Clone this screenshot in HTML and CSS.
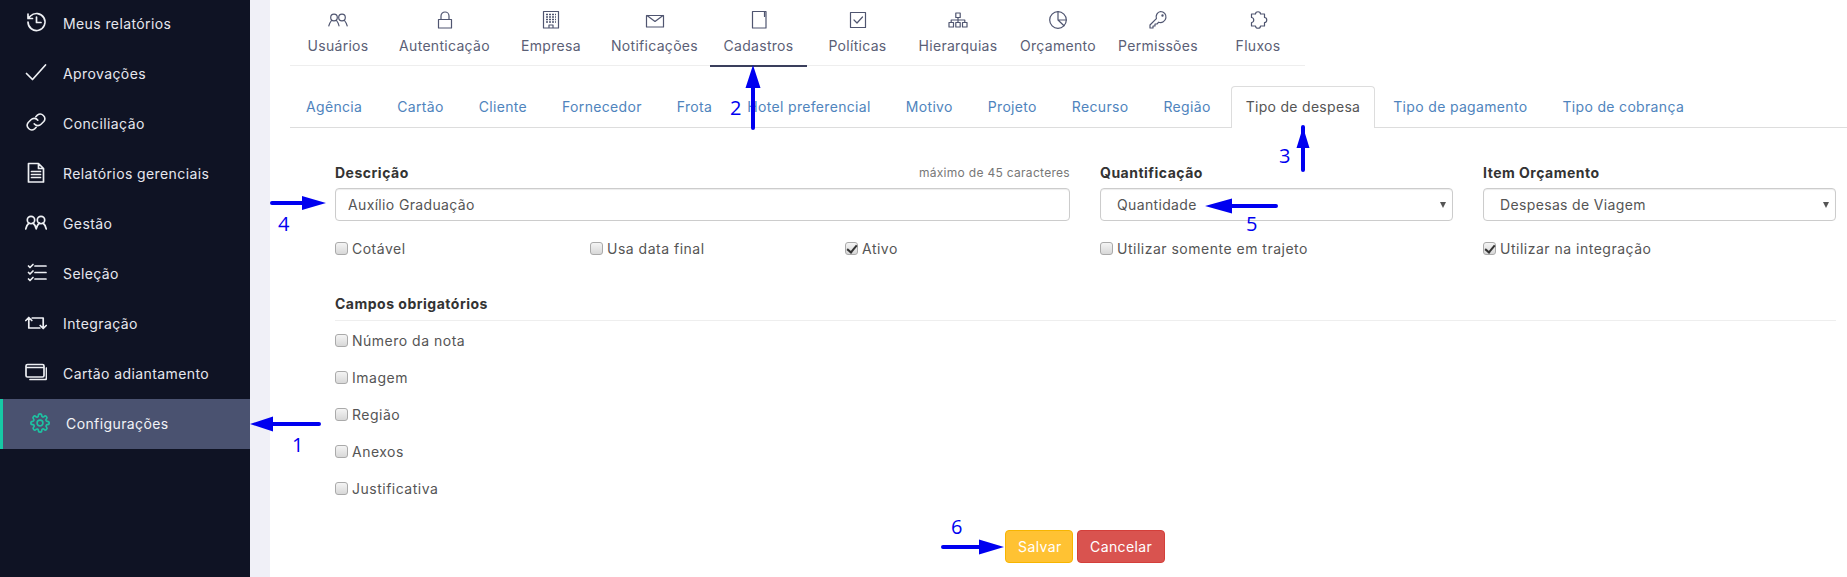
FILE: index.html
```html
<!DOCTYPE html>
<html lang="pt-BR">
<head>
<meta charset="utf-8">
<title>Configurações</title>
<link rel="stylesheet" href="styles.css">
</head>
<body>
<div class="app">
  <nav class="sidebar">
    <a class="side-item"><svg class="side-icon" viewBox="0 0 22 22"><path d="M3 11a8.500 8.500 0 1 0 2.500-6L3 7.500M3 3v4.500h4.500M11.500 6v5.500H16"/></svg>Meus relatórios</a>
    <a class="side-item"><svg class="side-icon" viewBox="0 0 22 22"><path d="M1.500 12.500l6 6L20.500 4"/></svg>Aprovações</a>
    <a class="side-item"><svg class="side-icon" viewBox="0 0 24 24"><path d="M10 14a5 5 0 0 0 7.500.5l3-3a5 5 0 0 0-7-7l-1.700 1.700M14 10a5 5 0 0 0-7.500-.5l-3 3a5 5 0 0 0 7 7l1.700-1.700"/></svg>Conciliação</a>
    <a class="side-item"><svg class="side-icon" viewBox="0 0 22 22"><path d="M3.500 2.500h10l5 5v13.500h-15zM13.500 2.500v5h5M6.500 10.500h9M6.500 13.500h9M6.500 16.500h9"/></svg>Relatórios gerenciais</a>
    <a class="side-item"><svg class="side-icon" viewBox="0 0 22 22"><circle cx="6" cy="9" r="3.700"/><circle cx="16" cy="9" r="3.700"/><path d="M.8 18c.3-2.500 1.500-4.500 3.200-6M8 12c1.700 1.500 2.900 3.500 3.200 6 .3-2.500 1.500-4.500 3.200-6M18 12c1.700 1.500 2.900 3.500 3.200 6"/></svg>Gestão</a>
    <a class="side-item"><svg class="side-icon" viewBox="0 0 22 22"><path d="M10 5h11M10 11.500h11M10 18h11M3.500 5L5 6.500l3-3M3.500 11.500L5 13l3-3M3.500 18L5 19.500l3-3"/></svg>Seleção</a>
    <a class="side-item"><svg class="side-icon" viewBox="0 0 22 22"><path d="M.8 9.500l3-3 3 3M3.800 7v10h11M21.200 14.500l-3 3-3-3M18.200 17V7h-11"/></svg>Integração</a>
    <a class="side-item"><svg class="side-icon" viewBox="0 0 22 22"><path d="M2.500 3.500h15a1.500 1.500 0 0 1 1.500 1.500v9.500a1.500 1.500 0 0 1-1.500 1.500h-15A1.500 1.500 0 0 1 1 14.500V5a1.500 1.500 0 0 1 1.500-1.500zM1 6.500h18M21.500 7v10a1.500 1.500 0 0 1-1.500 1.500H5"/></svg>Cartão adiantamento</a>
    <a class="side-item active"><svg class="side-icon gear" viewBox="0 0 24 24"><path d="M12 15.500a3.500 3.500 0 1 0 0-7 3.500 3.500 0 0 0 0 7zM19.400 15a1.650 1.650 0 0 0 .33 1.820l.06.06a2 2 0 0 1-2.830 2.830l-.06-.06a1.650 1.650 0 0 0-2.800 1.180V21a2 2 0 0 1-4 0v-.09a1.650 1.650 0 0 0-2.820-1.180l-.06.06a2 2 0 0 1-2.830-2.830l.06-.06A1.650 1.650 0 0 0 3.090 14H3a2 2 0 0 1 0-4h.09a1.650 1.650 0 0 0 1.180-2.820l-.06-.06a2 2 0 0 1 2.830-2.830l.06.06A1.650 1.650 0 0 0 10 3.090V3a2 2 0 0 1 4 0v.09a1.650 1.650 0 0 0 2.820 1.180l.06-.06a2 2 0 0 1 2.830 2.830l-.06.06A1.650 1.650 0 0 0 20.910 10H21a2 2 0 0 1 0 4h-.09a1.650 1.650 0 0 0-1.510 1z"/></svg>Configurações</a>
  </nav>
  <main class="main">
    <div class="topnav">
      <a class="top-item"><svg class="top-icon" viewBox="0 0 20 20"><circle cx="6" cy="7.500" r="3.300"/><circle cx="14" cy="7.500" r="3.300"/><path d="M.8 15.800c.3-2 1.300-3.500 2.700-5.300M8.500 10.500c1.400 1.800 2.400 3.300 2.500 5.300M16.500 10.500c1.400 1.800 2.400 3.300 2.700 5.300"/></svg><span>Usuários</span></a>
      <a class="top-item"><svg class="top-icon" viewBox="0 0 20 20"><path d="M3.500 9.500h13v8.500h-13zM6 9.500V6a4 4 0 0 1 8 0v3.500"/></svg><span>Autenticação</span></a>
      <a class="top-item"><svg class="top-icon" viewBox="0 0 20 20"><path d="M2.500 1.500h15V18h-15zM8 18v-3h4v3"/><path class="dots" d="M5 4.500h10M5 7h10M5 9.500h10M5 12h10"/></svg><span>Empresa</span></a>
      <a class="top-item"><svg class="top-icon" viewBox="0 0 20 20"><path d="M1.500 5.500h17v11.500h-17zM2 5.500l8 6 8-6"/></svg><span>Notificações</span></a>
      <a class="top-item current"><svg class="top-icon" viewBox="0 0 20 20"><path d="M3.500 1.500h13.500V18H3.500zM15.500 1.500v5"/></svg><span>Cadastros</span></a>
      <a class="top-item"><svg class="top-icon" viewBox="0 0 20 20"><path d="M2.500 2.500h15v15h-15zM6 10l3 3 5.500-6"/></svg><span>Políticas</span></a>
      <a class="top-item"><svg class="top-icon" viewBox="0 0 20 20"><path d="M7.800 3h4.400v4.500H7.800zM1 12.500h4.500V17H1zM7.800 12.500h4.400V17H7.800zM14.500 12.500H19V17h-4.500zM10 7.500v5M3.200 12.500V10h13.600v2.500"/></svg><span>Hierarquias</span></a>
      <a class="top-item"><svg class="top-icon" viewBox="0 0 20 20"><circle cx="10" cy="10" r="8.300"/><path d="M10 1.700V10h8.300M10 10l6 5.700"/></svg><span>Orçamento</span></a>
      <a class="top-item"><svg class="top-icon" viewBox="0 0 20 20"><path d="M12.500 1.500a5.500 5.500 0 1 1-1.800 10.700L9 14H7v2H5v2H2v-3l6.400-6.400A5.500 5.500 0 0 1 12.500 1.500z"/><circle cx="14.500" cy="5.500" r=".6"/></svg><span>Permissões</span></a>
      <a class="top-item"><svg class="top-icon" viewBox="0 0 20 20"><path d="M7.500 4C7.500 1 12.500 1 12.500 4H16.500V7.500C19.500 7.500 19.500 12.500 16.500 12.500V16H12.500C12.500 19 7.500 19 7.500 16H3.500V12.500C6.500 12.500 6.500 7.500 3.500 7.500V4Z"/></svg><span>Fluxos</span></a>
    </div>
    <div class="subtabs">
      <a class="subtab">Agência</a>
      <a class="subtab">Cartão</a>
      <a class="subtab">Cliente</a>
      <a class="subtab">Fornecedor</a>
      <a class="subtab">Frota</a>
      <a class="subtab">Hotel preferencial</a>
      <a class="subtab">Motivo</a>
      <a class="subtab">Projeto</a>
      <a class="subtab">Recurso</a>
      <a class="subtab">Região</a>
      <a class="subtab selected">Tipo de despesa</a>
      <a class="subtab">Tipo de pagamento</a>
      <a class="subtab">Tipo de cobrança</a>
    </div>
    <form class="form">
      <div class="fields">
        <div class="field">
          <div class="label-row"><label class="label">Descrição</label><span class="hint">máximo de 45 caracteres</span></div>
          <input class="control" type="text" value="Auxílio Graduação">
          <div class="check-cols">
            <label class="check"><input type="checkbox">Cotável</label>
            <label class="check"><input type="checkbox">Usa data final</label>
            <label class="check"><input type="checkbox" checked>Ativo</label>
          </div>
        </div>
        <div class="field">
          <div class="label-row"><label class="label">Quantificação</label></div>
          <div class="select-wrap"><select class="control select"><option>Quantidade</option></select></div>
          <label class="check single"><input type="checkbox">Utilizar somente em trajeto</label>
        </div>
        <div class="field">
          <div class="label-row"><label class="label">Item Orçamento</label></div>
          <div class="select-wrap"><select class="control select"><option>Despesas de Viagem</option></select></div>
          <label class="check single"><input type="checkbox" checked>Utilizar na integração</label>
        </div>
      </div>
      <h3 class="section">Campos obrigatórios</h3>
      <div class="required">
        <label class="check"><input type="checkbox">Número da nota</label>
        <label class="check"><input type="checkbox">Imagem</label>
        <label class="check"><input type="checkbox">Região</label>
        <label class="check"><input type="checkbox">Anexos</label>
        <label class="check"><input type="checkbox">Justificativa</label>
      </div>
      <div class="actions">
        <button type="button" class="btn save">Salvar</button>
        <button type="button" class="btn cancel">Cancelar</button>
      </div>
    </form>
  </main>
</div>
<svg class="arrows" viewBox="0 0 1847 577" width="1847" height="577">
  <path class="shaft" d="M273 424H319M753 88V128M1303 127V170M272 203H304M1222 206H1276M943 547H980"/>
  <path class="head" d="M250 424L273 416.500V431.500zM753 65L745.500 88H760.500zM1303 127L1296.500 148H1309.500zM326 203L302 196V210zM1205 206L1232 198.500V213.500zM1004 547L979 539.500V554.500z"/>
</svg>
<span class="note n1">1</span>
<span class="note n2">2</span>
<span class="note n3">3</span>
<span class="note n4">4</span>
<span class="note n5">5</span>
<span class="note n6">6</span>
</body>
</html>
```
FILE: styles.css
```css
* { box-sizing: border-box; }
html, body { margin: 0; height: 100%; overflow: hidden; }
body { font-family: Inter, "Liberation Sans", sans-serif; font-size: 14px; color: #555; background: #fff; }
.app { display: flex; height: 577px; }

.sidebar { width: 250px; flex: none; background: #0f1324; margin-right: 20px; box-shadow: 20px 0 0 #f0f0f7; }
.side-item { display: flex; align-items: center; height: 50px; padding: 0 0 2px 63px; position: relative; color: #e6e7ee; font-size: 14px; letter-spacing: .4px; }
.side-item:first-child { margin-top: -1px; }
.side-icon { position: absolute; left: 25px; top: 12px; width: 22px; height: 22px; fill: none; stroke: #eef0f4; stroke-width: 1.700; stroke-linecap: round; stroke-linejoin: round; }
.side-item.active { background: #4a5270; border-left: 3px solid #17c9a5; color: #f2f3f7; }
.side-icon.gear { left: 27px; top: 14px; width: 20px; height: 20px; stroke: #1ec2a2; stroke-width: 2; }

.main { flex: 1; min-width: 0; background: #fff; }

.topnav { display: grid; grid-template-columns: 96px 117px 96px 111px 97px 101px 100px 100px 100px 100px; height: 66px; margin-left: 20px; width: 1015px; border-bottom: 1px solid #eee; }
.top-item { display: flex; flex-direction: column; align-items: center; height: 67px; padding-top: 10px; color: #5b6076; font-size: 14px; letter-spacing: .3px; border-bottom: 2px solid transparent; white-space: nowrap; }
.top-item span { margin-top: 6px; line-height: 20px; }
.top-item.current { border-bottom-color: #3a3f5c; }
.top-icon { width: 20px; height: 20px; flex: none; fill: none; stroke: #4f5570; stroke-width: 1.200; stroke-linejoin: round; stroke-linecap: round; }
.top-icon .dots { stroke-linecap: butt; stroke-dasharray: 2 1; stroke-width: 1.300; }

.subtabs { display: flex; column-gap: 5px; margin: 20px 0 0 20px; padding-left: 1px; height: 42px; border-bottom: 1px solid #ddd; }
.subtab { padding: 0 14px; height: 42px; line-height: 40px; border: 1px solid transparent; border-bottom: 0; color: #4f84bd; font-size: 14px; letter-spacing: .33px; white-space: nowrap; }
.subtab.selected { margin-right: -2px; background: #fff; border-color: #ddd; border-radius: 4px 4px 0 0; color: #555; letter-spacing: .3px; }

.form { padding-left: 65px; width: 1566px; }
.fields { display: grid; grid-template-columns: 735px 353px 353px; column-gap: 30px; padding-top: 34px; }
.label-row { display: flex; justify-content: space-between; align-items: center; height: 20px; margin-bottom: 6px; }
.label { font-weight: 700; color: #333; font-size: 14px; letter-spacing: .5px; }
.hint { font-size: 12px; color: #777; letter-spacing: .3px; }
.control { display: block; width: 100%; height: 33px; padding: 0 12px; background: #fff; border: 1px solid #ccc; border-radius: 4px; font: inherit; color: #555; letter-spacing: .35px; box-shadow: inset 0 1px 1px rgba(0,0,0,.075); }
.select { appearance: none; padding-left: 16px; }
.select-wrap { position: relative; }
.select-wrap::after { content: ""; position: absolute; right: 7px; top: 14px; border: 3.500px solid transparent; border-top: 6px solid #555; border-bottom: 0; }
.check { display: flex; align-items: center; color: #555; font-size: 14px; letter-spacing: .5px; white-space: nowrap; }
.check input { appearance: none; flex: none; width: 13px; height: 13px; margin: 0 4px 0 0; border: 1px solid #aaa; border-radius: 3px; background: linear-gradient(#f4f4f4, #d8d8d8); position: relative; }
.check input:checked::after { content: ""; position: absolute; left: 3px; top: 0; width: 4px; height: 8px; border: solid #333; border-width: 0 2px 2px 0; transform: rotate(40deg); }
.check-cols { display: grid; grid-template-columns: repeat(3, 255px); margin-top: 17px; height: 20px; }
.check.single { margin-top: 17px; height: 20px; }
.section { margin: 36px 0 0; height: 27px; line-height: 20px; font-size: 14px; font-weight: 700; letter-spacing: .5px; color: #333; border-bottom: 1px solid #eee; width: 1501px; }
.required { display: flex; flex-direction: column; row-gap: 17px; margin-top: 9px; }
.required .check { height: 20px; }
.actions { display: flex; justify-content: center; column-gap: 4px; width: 1500px; margin-top: 32px; }
.btn { height: 33px; padding: 0 12px; border-radius: 4px; border: 1px solid; font: inherit; letter-spacing: .4px; color: #fff; }
.btn.save { width: 68px; background: #ffc233; border-color: #f7b500; }
.btn.cancel { width: 88px; background: #d9534f; border-color: #d43f3a; }

.arrows { position: absolute; left: 0; top: 0; pointer-events: none; }
.shaft { fill: none; stroke: #0000f0; stroke-width: 4; stroke-linecap: round; }
.head { fill: #0000f0; }
.note { position: absolute; color: #0000f0; font-family: "Open Sans", sans-serif; font-size: 20px; line-height: 24px; }
.n1 { left: 292px; top: 433px; }
.n2 { left: 730px; top: 96px; }
.n3 { left: 1279px; top: 144px; }
.n4 { left: 278px; top: 212px; }
.n5 { left: 1246px; top: 212px; }
.n6 { left: 951px; top: 515px; }
```
